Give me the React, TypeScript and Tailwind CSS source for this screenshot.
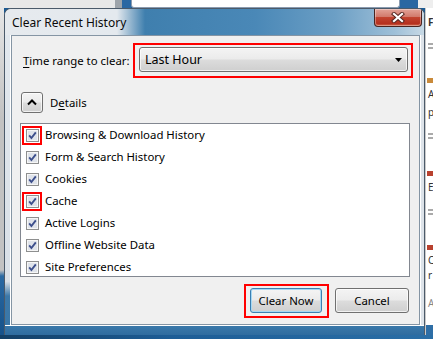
import type { ReactNode } from 'react';

const items = [
    'Browsing & Download History',
    'Form & Search History',
    'Cookies',
    'Cache',
    'Active Logins',
    'Offline Website Data',
    'Site Preferences',
];

const marked = [0, 3];

const btnBg =
    'bg-[linear-gradient(to_bottom,#f4f4f4_0%,#ebebeb_48%,#dcdcdc_52%,#cfcfcf_100%)]';

function Checkbox() {
    return (
        <svg width="13" height="13" viewBox="0 0 13 13">
            <rect x="0.5" y="0.5" width="12" height="12" fill="#f6f6f6" stroke="#8e8f8f" />
            <rect x="2" y="2" width="9" height="9" fill="#dfe3ea" />
            <path d="M3.2 6.4 L5.4 9 L9.8 3.4" fill="none" stroke="#3d4f8c" strokeWidth="1.9" />
        </svg>
    );
}

function CheckRow({ label, highlight }: { label: string; highlight: boolean }) {
    return (
        <div className="flex h-[22px] items-center">
            <div
                className={`ml-[1px] flex h-[19px] w-[20px] shrink-0 items-center justify-center border-2 ${
                    highlight ? 'border-[#ff0000]' : 'border-transparent'
                }`}
            >
                <Checkbox />
            </div>
            <span className="ml-[3px] whitespace-nowrap">{label}</span>
        </div>
    );
}

function WinButton({ children, primary }: { children: ReactNode; primary?: boolean }) {
    return (
        <div
            className={`flex h-[25px] items-center justify-center rounded-[3px] border ${btnBg} ${
                primary
                    ? 'w-[72px] border-[#3c7fb1] shadow-[inset_0_0_0_1px_#a6d8f4]'
                    : 'w-[74px] border-[#707070] shadow-[inset_0_0_0_1px_rgba(255,255,255,0.7)]'
            }`}
        >
            {children}
        </div>
    );
}

function BackdropStrip() {
    return (
        <div className="flex w-[8px] flex-col overflow-hidden border-l border-[#c9c9c9] bg-white text-[10px] leading-none text-[#333]">
            <span className="mt-[9px] ml-[2px] font-bold">F</span>
            <div className="mt-[16px] ml-[2px] h-[6px] w-[5px] border-y-2 border-[#aaa]" />
            <div className="mt-[29px] ml-[1px] h-[5px] bg-[#c98a3a]" />
            <span className="mt-[6px] ml-[2px]">A</span>
            <span className="mt-[8px] ml-[2px]">p</span>
            <div className="mt-[16px] ml-[2px] h-[6px] w-[5px] border-y-2 border-[#aaa]" />
            <div className="mt-[32px] ml-[1px] h-[5px] bg-[#b8412e]" />
            <span className="mt-[6px] ml-[2px]">E</span>
            <div className="mt-[17px] ml-[2px] h-[6px] w-[5px] border-y-2 border-[#aaa]" />
            <div className="mt-[30px] ml-[1px] h-[5px] bg-[#b8412e]" />
            <span className="mt-[5px] ml-[2px]">C</span>
            <span className="mt-[5px] ml-[2px]">r</span>
            <span className="mt-[18px] ml-[2px] text-[#888]">A</span>
            <div className="mt-auto h-[10px] bg-[#2e6ea6]" />
        </div>
    );
}

export default function App() {
    return (
        <div className="flex h-[339px] w-[433px] flex-col overflow-hidden bg-[#1b5a93] font-['Noto_Sans',sans-serif] text-[11.4px] text-black">
            <div className="flex h-[8px] shrink-0">
                <div className="w-[115px] bg-[#e8e8e8]" />
                <div className="w-[7px] bg-[#9ea4aa]" />
                <div className="w-[9px] bg-[#2a67a2]" />
                <div className="w-[269px] rounded-b-[3px] border border-t-0 border-[#8a9bb0] bg-white" />
                <div className="w-[18px] bg-[#2a67a2]" />
                <div className="flex-1 bg-[#eeeeee]" />
            </div>

            <div className="flex h-[327px] shrink-0">
                <div className="w-[4px] bg-[linear-gradient(to_bottom,#e6e6e6_0px,#c2c2c2_110px,#c2c2c2_262px,#2a69a2_268px,#17528a_100%)]" />

                <div className="flex w-[421px] flex-col overflow-hidden rounded-t-[7px] border border-b-0 border-[#4b5a6a] bg-[#dfe5eb]">
                    <div className="flex h-[26px] shrink-0 items-start bg-[linear-gradient(to_right,#e6eaee_0px,#e4e9ee_112px,#3f7fae_140px,#4a88b7_250px,#6c9fc5_330px,#9fc0d8_390px,#c9dae6_420px)]">
                        <span className="mt-[6px] ml-[7px] text-[12px] leading-[16px] text-[#0a0a0a]">Clear Recent History</span>
                        <div className="mr-[2px] ml-auto flex h-[18px] w-[48px] items-center justify-center rounded-b-[4px] border border-t-0 border-[#4a2420] bg-[linear-gradient(to_bottom,#e3a398_0%,#d27a6c_45%,#c2432f_50%,#b5301f_85%,#d0664a_100%)] shadow-[inset_0_0_0_1px_rgba(255,255,255,0.35)]">
                            <svg width="14" height="11" viewBox="0 0 14 11">
                                <path d="M3 2 L11 9 M11 2 L3 9" stroke="#5a2a24" strokeWidth="4.2" strokeLinecap="square" />
                                <path d="M3 2 L11 9 M11 2 L3 9" stroke="#ffffff" strokeWidth="2.2" strokeLinecap="square" />
                            </svg>
                        </div>
                    </div>

                    <div className="flex h-[290px] shrink-0">
                        <div className="w-[6px] border-r border-white bg-[linear-gradient(to_bottom,#e2e8ee_0%,#d9e0e7_85%,#3c78a8_90%,#3a77a8_100%)]" />
                        <div className="flex w-[409px] flex-col border border-[#8595a4] bg-[#f0f0f0]">
                            <div className="mt-[7px] flex h-[35px] items-center">
                                <span className="ml-[11px] whitespace-nowrap">
                                    <span className="underline underline-offset-2">T</span>ime range to clear:
                                </span>
                                <div className="mr-[6px] ml-auto flex h-[35px] w-[280px] shrink-0 items-start border-2 border-[#ff0000] pt-[2px] pl-[4px]">
                                    <div className={`flex h-[25px] w-[269px] items-center rounded-[3px] border border-[#707070] ${btnBg} shadow-[inset_0_0_0_1px_rgba(255,255,255,0.7)]`}>
                                        <span className="mt-[1px] ml-[5px] text-[12.5px]">Last Hour</span>
                                        <svg className="mr-[5px] ml-auto" width="7" height="4" viewBox="0 0 7 4">
                                            <path d="M0 0 H7 L3.5 4 Z" fill="#000" />
                                        </svg>
                                    </div>
                                </div>
                            </div>

                            <div className="mt-[14px] flex items-center">
                                <div className={`ml-[9px] flex h-[21px] w-[22px] items-center justify-center rounded-[3px] border border-[#707070] ${btnBg} shadow-[inset_0_0_0_1px_rgba(255,255,255,0.7)]`}>
                                    <svg width="10" height="7" viewBox="0 0 10 7">
                                        <path d="M1 5.5 L5 1.5 L9 5.5" fill="none" stroke="#000" strokeWidth="2" />
                                    </svg>
                                </div>
                                <span className="ml-[7px]">
                                    D<span className="underline underline-offset-2">e</span>tails
                                </span>
                            </div>

                            <div className="mt-[10px] ml-[8px] h-[154px] w-[390px] overflow-hidden border border-[#828790] bg-white">
                                {items.map((label, i) => (
                                    <CheckRow key={label} label={label} highlight={marked.includes(i)} />
                                ))}
                            </div>

                            <div className="mt-[7px] mr-[10px] flex items-start justify-end">
                                <div className="flex h-[34px] w-[85px] items-start border-2 border-[#ff0000] pt-[2px] pl-[4px]">
                                    <WinButton primary>Clear Now</WinButton>
                                </div>
                                <div className="mt-[4px] ml-[6px]">
                                    <WinButton>Cancel</WinButton>
                                </div>
                            </div>
                        </div>
                        <div className="w-[4px] border-l border-white bg-[#dde3e9]" />
                    </div>

                    <div className="h-[10px] shrink-0 border-t border-white bg-[linear-gradient(to_bottom,#3a78aa_0%,#2f6c9f_100%)]" />
                </div>

                <BackdropStrip />
            </div>

            <div className="flex-1 bg-[linear-gradient(to_right,#133f66,#1d5d96_40%,#2a6ea6_100%)]" />
        </div>
    );
}
